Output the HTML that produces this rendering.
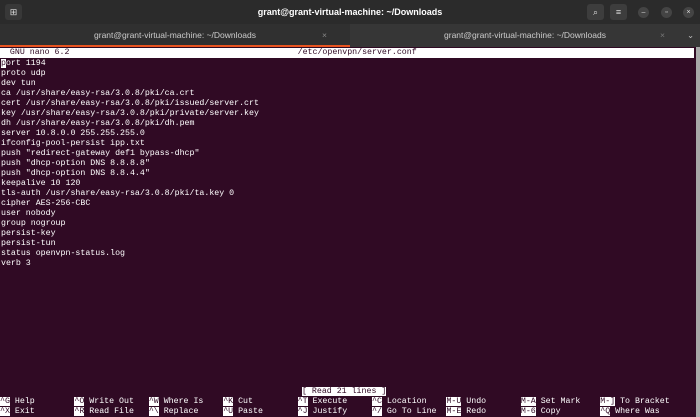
<!DOCTYPE html>
<html><head><style>
body{margin:0;width:700px;height:417px;overflow:hidden;background:#300a24;font-family:"Liberation Sans",sans-serif;position:relative}
.hdr{position:absolute;left:0;top:0;width:700px;height:24px;background:#2b2b2b}
.tabs{position:absolute;left:0;top:24px;width:700px;height:23px;background:#363636}
.tab{position:absolute;top:0;height:23px;width:350px;color:#ccc;font-size:8.5px;line-height:22px;text-align:center}
.t1{left:0;background:#303030;border-bottom:2px solid #e95420;height:21px}
.btn{position:absolute;top:4px;width:17px;height:16px;border-radius:3px;background:#3d3d3d;color:#ddd;font-size:9px;text-align:center;line-height:16px}
.rd{position:absolute;top:7px;width:11px;height:11px;border-radius:50%;background:#444;color:#ddd;font-size:7px;text-align:center;line-height:11px}
.term{position:absolute;left:0;top:47px;width:696px;height:370px}
.mono{font-family:"Liberation Mono",monospace;font-size:8.28px;line-height:10px;white-space:pre;color:#fff}
.title{position:absolute;left:0;top:1px;width:694px;height:10px;background:#fff;color:#300a24}
.body{position:absolute;left:1px;top:11.5px}
.inv{background:#fff;color:#300a24}
.sb{position:absolute;left:696px;top:47px;width:4px;height:370px;background:#a8a8a8}
</style></head><body>
<div class="hdr">
 <div class="btn" style="left:5px;top:4px;background:#383838">⊞</div>
 <div style="position:absolute;left:0;width:700px;top:0;line-height:24px;text-align:center;color:#fff;font-weight:bold;font-size:9px">grant@grant-virtual-machine: ~/Downloads</div>
 <div class="btn" style="left:587px">⌕</div>
 <div class="btn" style="left:610px">≡</div>
 <div class="rd" style="left:638px">–</div>
 <div class="rd" style="left:661px">▫</div>
 <div class="rd" style="left:683px">×</div>
</div>
<div class="tabs">
 <div class="tab t1">grant@grant-virtual-machine: ~/Downloads<span style="position:absolute;left:322px;color:#888">×</span></div>
 <div class="tab" style="left:350px">grant@grant-virtual-machine: ~/Downloads<span style="position:absolute;left:310px;color:#777">×</span><span style="position:absolute;left:337px;color:#bbb">⌄</span></div>
</div>
<div class="term mono">
<div class="title">  GNU nano 6.2                                              /etc/openvpn/server.conf</div>
<div class="body"><span class="inv">p</span>ort 1194
proto udp
dev tun
ca /usr/share/easy-rsa/3.0.8/pki/ca.crt
cert /usr/share/easy-rsa/3.0.8/pki/issued/server.crt
key /usr/share/easy-rsa/3.0.8/pki/private/server.key
dh /usr/share/easy-rsa/3.0.8/pki/dh.pem
server 10.8.0.0 255.255.255.0
ifconfig-pool-persist ipp.txt
push "redirect-gateway def1 bypass-dhcp"
push "dhcp-option DNS 8.8.8.8"
push "dhcp-option DNS 8.8.4.4"
keepalive 10 120
tls-auth /usr/share/easy-rsa/3.0.8/pki/ta.key 0
cipher AES-256-CBC
user nobody
group nogroup
persist-key
persist-tun
status openvpn-status.log
verb 3</div>
<div style="position:absolute;left:302px;top:340px"><span class="inv">[ Read 21 lines ]</span></div>
<div style="position:absolute;left:0;top:350px"><span class="inv">^G</span> Help        <span class="inv">^O</span> Write Out   <span class="inv">^W</span> Where Is    <span class="inv">^K</span> Cut         <span class="inv">^T</span> Execute     <span class="inv">^C</span> Location    <span class="inv">M-U</span> Undo       <span class="inv">M-A</span> Set Mark    <span class="inv">M-]</span> To Bracket</div>
<div style="position:absolute;left:0;top:360px"><span class="inv">^X</span> Exit        <span class="inv">^R</span> Read File   <span class="inv">^\</span> Replace     <span class="inv">^U</span> Paste       <span class="inv">^J</span> Justify     <span class="inv">^/</span> Go To Line  <span class="inv">M-E</span> Redo       <span class="inv">M-6</span> Copy        <span class="inv">^Q</span> Where Was</div>
</div>
<div class="sb"></div>
</body></html>
